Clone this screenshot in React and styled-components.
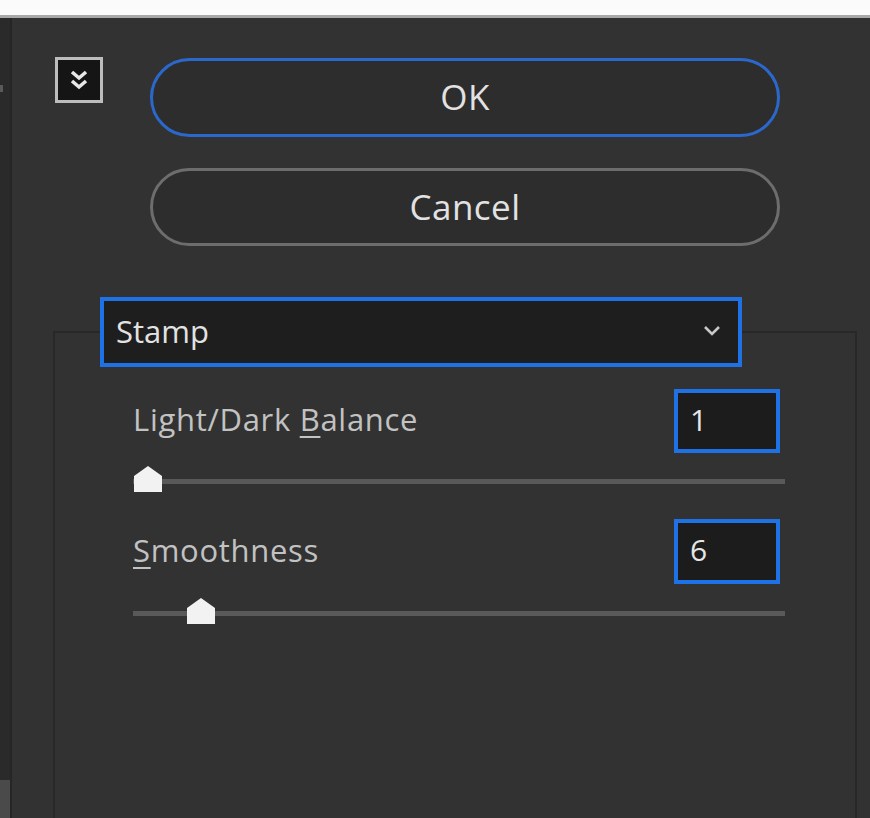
import React from 'react';
import styled, { createGlobalStyle } from 'styled-components';

const GlobalStyle = createGlobalStyle`
  html, body {
    margin: 0;
    padding: 0;
    background: #323232;
    overflow: hidden;
  }
  body {
    font-family: "Open Sans", "Noto Sans", sans-serif;
    color: #d6d6d6;
  }
`;

const blue = '#1f72e6';

const Page = styled.div`
  width: 870px;
  height: 818px;
  display: flex;
  flex-direction: column;
  overflow: hidden;
`;

const TopStrip = styled.div`
  height: 15px;
  background: #fbfbfb;
  border-bottom: 3px solid #a9a9a9;
  flex-shrink: 0;
`;

const Body = styled.div`
  flex: 1;
  display: flex;
  min-height: 0;
`;

const LeftRail = styled.div`
  width: 10px;
  flex-shrink: 0;
  background: #2a2a2a;
  border-right: 2px solid #262626;
  display: flex;
  flex-direction: column;
  justify-content: space-between;
  padding: 67px 0 0;
`;

const RailMark = styled.div`
  width: ${p => p.w}px;
  height: ${p => p.h}px;
  background: ${p => p.c};
`;

const Main = styled.div`
  flex: 1;
  display: flex;
  flex-direction: column;
  padding-top: 40px;
`;

const TopRow = styled.div`
  display: flex;
  align-items: flex-start;
  padding-left: 43px;
`;

const CollapseBox = styled.div`
  width: 42px;
  height: 40px;
  border: 3px solid #bdbdbd;
  background: #151515;
  display: flex;
  align-items: center;
  justify-content: center;
  margin-top: -1px;
`;

const ButtonStack = styled.div`
  display: flex;
  flex-direction: column;
  gap: 31px;
  margin-left: 47px;
`;

const PillButton = styled.button`
  width: 630px;
  height: ${p => p.h}px;
  border-radius: 40px;
  border: 3px solid ${p => (p.primary ? '#2b68cc' : '#6d6d6d')};
  background: #2d2d2d;
  color: #e2e2e2;
  font-family: "Open Sans", "Noto Sans", sans-serif;
  font-size: 35px;
  letter-spacing: 0.5px;
  padding: 0 0 2px;
  cursor: pointer;
`;

const Group = styled.fieldset`
  margin: 51px 13px 0 41px;
  padding: 0 70px 0 78px;
  border: 2px solid #282828;
  min-height: 560px;
  display: block;
`;

const Legend = styled.legend`
  margin-left: -33px;
  padding: 0;
`;

const Select = styled.div`
  box-sizing: border-box;
  width: 642px;
  height: 70px;
  border: 4px solid ${blue};
  background: #1e1e1e;
  display: flex;
  align-items: center;
  justify-content: space-between;
  padding: 0 16px 2px 12px;
  color: #e2e2e2;
  font-size: 31px;
`;

const FieldRow = styled.div`
  display: flex;
  align-items: center;
  justify-content: space-between;
  margin-top: ${p => p.mt}px;
  padding-right: 5px;
`;

const Label = styled.span`
  font-size: 31px;
  letter-spacing: 0.7px;
  color: #c2c2c2;
  padding-bottom: 4px;
  u {
    text-underline-offset: 5px;
    text-decoration-thickness: 2px;
  }
`;

const NumberBox = styled.div`
  box-sizing: border-box;
  width: 106px;
  height: ${p => p.h}px;
  border: 4px solid ${blue};
  background: #1c1c1c;
  color: #e6e6e6;
  font-size: 30px;
  display: flex;
  align-items: center;
  padding: 0 0 4px 12px;
`;

const SliderWrap = styled.div`
  position: relative;
  height: 28px;
  margin-top: ${p => p.mt}px;
`;

const Track = styled.div`
  position: absolute;
  left: 0;
  right: 0;
  top: 14px;
  height: 5px;
  background: #595959;
`;

const Thumb = styled.svg`
  position: absolute;
  top: 0;
  width: 30px;
  height: 28px;
`;

const TRACK_W = 652;
const THUMB_W = 30;

const Slider = ({ value, max, mt }) => {
  const left = ((value - 1) / (max - 1)) * (TRACK_W - THUMB_W);
  return (
    <SliderWrap mt={mt}>
      <Track />
      <Thumb viewBox="0 0 30 28" style={{ left }}>
        <polygon points="1,11 15,1 29,11 29,27 1,27" fill="#f2f2f2" />
      </Thumb>
    </SliderWrap>
  );
};

const DoubleChevron = () => (
  <svg width="22" height="24" viewBox="0 0 22 24">
    <polyline points="4,4 11,10 18,4" fill="none" stroke="#e8e8e8" strokeWidth="3.6" strokeLinejoin="miter" />
    <polyline points="4,13 11,19 18,13" fill="none" stroke="#e8e8e8" strokeWidth="3.6" strokeLinejoin="miter" />
  </svg>
);

const Chevron = () => (
  <svg width="20" height="12" viewBox="0 0 20 12">
    <polyline points="3,2 10,9 17,2" fill="none" stroke="#c8c8c8" strokeWidth="2.6" />
  </svg>
);

export default function App() {
  return (
    <Page>
      <GlobalStyle />
      <TopStrip />
      <Body>
        <LeftRail>
          <RailMark w={3} h={7} c="#5a5a5a" />
          <RailMark w={10} h={38} c="#4a4a4a" />
        </LeftRail>
        <Main>
          <TopRow>
            <CollapseBox>
              <DoubleChevron />
            </CollapseBox>
            <ButtonStack>
              <PillButton primary h={79}>OK</PillButton>
              <PillButton h={78}>Cancel</PillButton>
            </ButtonStack>
          </TopRow>
          <Group>
            <Legend>
              <Select>
                <span>Stamp</span>
                <Chevron />
              </Select>
            </Legend>
            <FieldRow mt={22}>
              <Label>Light/Dark <u>B</u>alance</Label>
              <NumberBox h={64}>1</NumberBox>
            </FieldRow>
            <Slider value={1} max={50} mt={12} />
            <FieldRow mt={26}>
              <Label><u>S</u>moothness</Label>
              <NumberBox h={65}>6</NumberBox>
            </FieldRow>
            <Slider value={6} max={60} mt={13} />
          </Group>
        </Main>
      </Body>
    </Page>
  );
}
